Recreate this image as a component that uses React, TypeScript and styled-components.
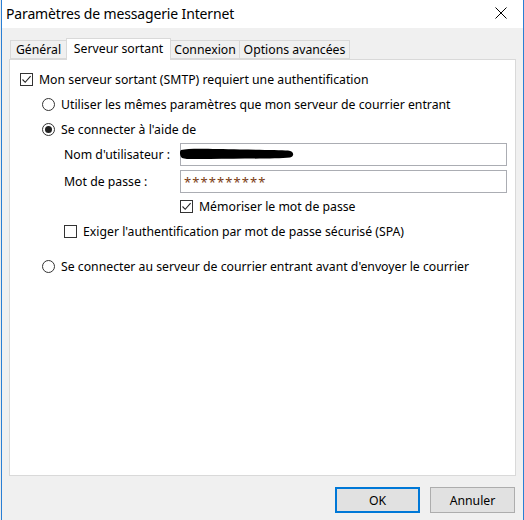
import React from "react";
import styled, { createGlobalStyle } from "styled-components";

const Global = createGlobalStyle`
  html, body { margin: 0; padding: 0; background: #ebebeb; }
  body { width: 524px; height: 520px; overflow: hidden; }
  * { box-sizing: border-box; }
`;

const FONT = `"Noto Sans", "Open Sans", sans-serif`;

const Page = styled.div`
  width: 524px;
  height: 520px;
  padding-left: 1px;
  font-family: ${FONT};
  font-size: 12.25px;
  color: #000;
`;

const Window = styled.div`
  width: 523px;
  height: 520px;
  border-left: 1px solid #2a7fd4;
  border-right: 1px solid #2a7fd4;
  background: #f0f0f0;
  display: flex;
  flex-direction: column;
`;

const TitleBar = styled.div`
  height: 28px;
  background: #fff;
  display: flex;
  align-items: center;
  justify-content: space-between;
  padding: 0 16px 2px 4px;
`;

const Title = styled.div`
  font-size: 14px;
  letter-spacing: -0.15px;
`;

const Body = styled.div`
  flex: 1;
  display: flex;
  flex-direction: column;
  padding: 9px 7px 0 7px;
`;

const TabStrip = styled.div`
  display: flex;
  align-items: flex-end;
  height: 22px;
  padding-left: 2px;
  position: relative;
  z-index: 1;
`;

const Tab = styled.div<{ $active?: boolean; $w: number }>`
  width: ${(p) => p.$w}px;
  height: ${(p) => (p.$active ? 22 : 19)}px;
  margin-bottom: ${(p) => (p.$active ? -1 : 0)}px;
  background: ${(p) => (p.$active ? "#fff" : "#f0f0f0")};
  border: 1px solid #d9d9d9;
  border-bottom: ${(p) => (p.$active ? "none" : "1px solid #d9d9d9")};
  margin-left: -1px;
  display: flex;
  align-items: center;
  justify-content: center;
  padding-bottom: ${(p) => (p.$active ? 3 : 0)}px;
  white-space: nowrap;
`;

const Panel = styled.div`
  height: 417px;
  background: #fff;
  border: 1px solid #d9d9d9;
  padding: 7px 8px 0 10px;
  display: flex;
  flex-direction: column;
`;

const Row = styled.div<{ $indent: number; $h?: number; $mt?: number }>`
  display: flex;
  align-items: center;
  height: ${(p) => p.$h ?? 25}px;
  margin-top: ${(p) => p.$mt ?? 0}px;
  padding-left: ${(p) => p.$indent}px;
  white-space: nowrap;
`;

const Box = styled.span`
  width: 13px;
  height: 13px;
  border: 1px solid #333;
  background: #fff;
  margin-right: 6px;
  flex: none;
  display: inline-flex;
  align-items: center;
  justify-content: center;
`;

const Radio = styled.span<{ $on?: boolean }>`
  width: 13px;
  height: 13px;
  border: 1px solid #333;
  border-radius: 50%;
  background: #fff;
  margin-right: 6px;
  flex: none;
  display: inline-flex;
  align-items: center;
  justify-content: center;
  &::after {
    content: "";
    display: ${(p) => (p.$on ? "block" : "none")};
    width: 7px;
    height: 7px;
    border-radius: 50%;
    background: #222;
  }
`;

const FieldLabel = styled.span`
  width: 116px;
  flex: none;
`;

const Input = styled.div`
  flex: 1;
  height: 23px;
  border: 1px solid #abadb3;
  background: #fff;
  display: flex;
  align-items: center;
  padding-left: 3px;
  position: relative;
`;

const Stars = styled.span`
  color: #7a3b12;
  font-size: 13px;
  letter-spacing: 1.1px;
  padding-top: 1px;
`;

const Scribble = styled.svg`
  position: absolute;
  left: -1px;
  top: 3px;
`;

const Footer = styled.div`
  display: flex;
  justify-content: flex-end;
  gap: 10px;
  padding: 11px 1px 0 0;
`;

const Button = styled.div<{ $default?: boolean }>`
  width: 85px;
  height: 26px;
  background: #e1e1e1;
  border: ${(p) => (p.$default ? "2px solid #0078d7" : "1px solid #adadad")};
  display: flex;
  align-items: center;
  justify-content: center;
`;

const Check = () => (
  <svg width="11" height="11" viewBox="0 0 11 11">
    <path d="M1.5 5.5 L4.2 8.3 L9.6 2.2" fill="none" stroke="#222" strokeWidth="1.1" />
  </svg>
);

const CloseIcon = () => (
  <svg width="12" height="12" viewBox="0 0 12 12">
    <path d="M0.5 0.5 L11.5 11.5 M11.5 0.5 L0.5 11.5" stroke="#000" strokeWidth="1" />
  </svg>
);

export default function App() {
  return (
    <Page>
      <Global />
      <Window>
        <TitleBar>
          <Title>Paramètres de messagerie Internet</Title>
          <CloseIcon />
        </TitleBar>
        <Body>
          <TabStrip>
            <Tab $w={57}>Général</Tab>
            <Tab $w={105} $active>Serveur sortant</Tab>
            <Tab $w={70}>Connexion</Tab>
            <Tab $w={111}>Options avancées</Tab>
          </TabStrip>
          <Panel>
            <Row $indent={0}>
              <Box><Check /></Box>
              Mon serveur sortant (SMTP) requiert une authentification
            </Row>
            <Row $indent={22}>
              <Radio />
              Utiliser les mêmes paramètres que mon serveur de courrier entrant
            </Row>
            <Row $indent={22}>
              <Radio $on />
              Se connecter à l'aide de
            </Row>
            <Row $indent={44} $h={23} $mt={1}>
              <FieldLabel>Nom d'utilisateur :</FieldLabel>
              <Input>
                <Scribble width="118" height="14" viewBox="0 0 118 14">
                  <path
                    d="M1 3 C10 1 30 2 60 2.5 C80 2.8 100 3 108 3.5 C114 4 115 9 110 10.5 C95 12 60 11.5 30 12 C15 12 6 12.5 2 11 C-0.5 9 -0.5 4 1 3 Z"
                    fill="#000"
                  />
                </Scribble>
              </Input>
            </Row>
            <Row $indent={44} $h={23} $mt={4}>
              <FieldLabel>Mot de passe :</FieldLabel>
              <Input>
                <Stars>**********</Stars>
              </Input>
            </Row>
            <Row $indent={160} $h={25} $mt={1}>
              <Box><Check /></Box>
              Mémoriser le mot de passe
            </Row>
            <Row $indent={44}>
              <Box />
              Exiger l'authentification par mot de passe sécurisé (SPA)
            </Row>
            <Row $indent={22} $mt={10}>
              <Radio />
              Se connecter au serveur de courrier entrant avant d'envoyer le courrier
            </Row>
          </Panel>
          <Footer>
            <Button $default>OK</Button>
            <Button>Annuler</Button>
          </Footer>
        </Body>
      </Window>
    </Page>
  );
}
